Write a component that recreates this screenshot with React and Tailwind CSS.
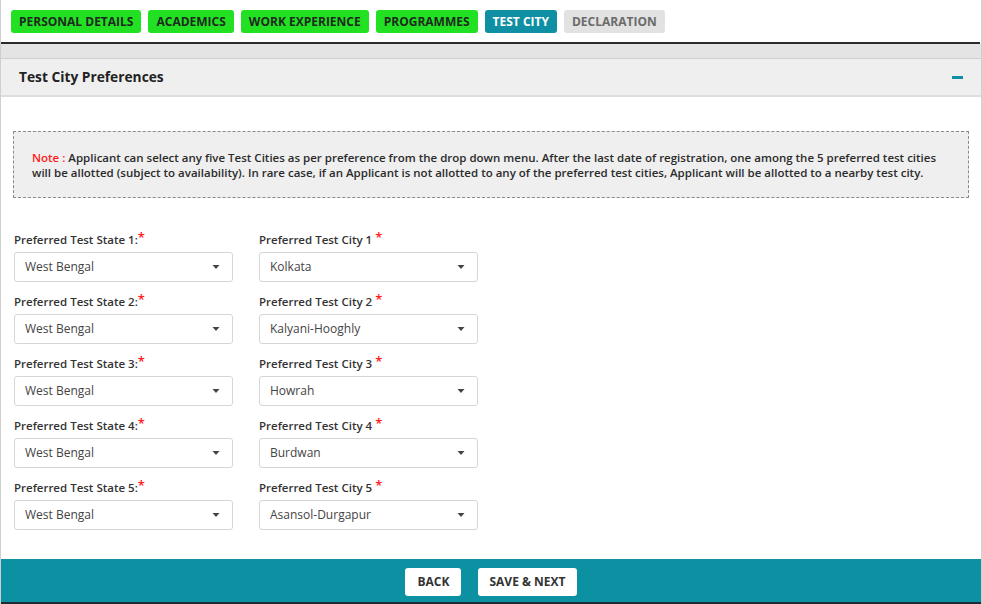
import React from "react";

const tabs = [
  { name: "PERSONAL DETAILS", state: "done" },
  { name: "ACADEMICS", state: "done" },
  { name: "WORK EXPERIENCE", state: "done" },
  { name: "PROGRAMMES", state: "done" },
  { name: "TEST CITY", state: "active" },
  { name: "DECLARATION", state: "todo" },
];

const prefs = [
  { state: "West Bengal", city: "Kolkata" },
  { state: "West Bengal", city: "Kalyani-Hooghly" },
  { state: "West Bengal", city: "Howrah" },
  { state: "West Bengal", city: "Burdwan" },
  { state: "West Bengal", city: "Asansol-Durgapur" },
];

const tabClass = {
  done: "bg-[#22e123] text-[#1f2a1f]",
  active: "bg-[#0e8fa3] text-white",
  todo: "bg-[#e2e2e2] text-[#6b6b6b]",
};

const Select = ({ value }) => (
  <div className="flex items-center justify-between w-[219px] h-[30px] border border-[#d6d6d6] rounded-[3px] bg-white pl-[10px] pr-[12px] text-[12px] text-[#444]">
    <span>{value}</span>
    <svg width="8" height="5" viewBox="0 0 8 5">
      <path d="M0.5 0h7L4 4z" fill="#444" />
    </svg>
  </div>
);

const Label = ({ children }) => (
  <div className="text-[11.5px] font-semibold text-[#333] mb-[3px] leading-[18px]">
    {children}
  </div>
);

const Star = () => (
  <span className="text-[#ff1a1a] align-top text-[13px] leading-none">*</span>
);

const App = () => {
  return (
    <div
      className="w-[982px] h-[604px] bg-white flex flex-col border-x border-[#cfcfcf] overflow-hidden"
      style={{ fontFamily: "'Open Sans', 'Noto Sans', sans-serif" }}
    >
      <div className="flex gap-[7px] px-[10px] pt-[10px] h-[42px]">
        {tabs.map((t) => (
          <div
            key={t.name}
            className={`h-[23px] px-[8px] flex items-center rounded-[3px] text-[12px] font-bold ${tabClass[t.state]}`}
          >
            {t.name}
          </div>
        ))}
      </div>
      <div className="h-[2px] bg-[#2b2b2b] mr-[1px]" />
      <div className="h-[15px] bg-[#e4e4e4] border-b border-[#d0d0d0]" />
      <div className="h-[38px] bg-[#efefef] border-b-2 border-[#dedede] flex items-center justify-between pl-[18px] pr-[18px]">
        <span className="text-[13.75px] font-bold text-[#222] pt-[1px]">Test City Preferences</span>
        <span className="w-[11px] h-[3px] bg-[#0e8fa3]" />
      </div>
      <div className="flex-1 px-[12px] pt-[34px]">
        <div className="w-[956px] h-[67px] border border-dashed border-[#8a8a8a] bg-[#efefef] px-[18px] flex items-center">
          <p className="text-[11.5px] font-semibold text-[#2b2b2b] leading-[15px]">
            <span className="text-[#ff1a1a]">Note : </span>
            Applicant can select any five Test Cities as per preference from the drop down menu. After the last date of registration, one among the 5 preferred test cities will be allotted (subject to availability). In rare case, if an Applicant is not allotted to any of the preferred test cities, Applicant will be allotted to a nearby test city.
          </p>
        </div>
        <div className="pt-[33px] pl-[1px] flex flex-col gap-[11px]">
          {prefs.map((p, i) => (
            <div key={i} className="flex gap-[26px]">
              <div>
                <Label>
                  Preferred Test State {i + 1}:<Star />
                </Label>
                <Select value={p.state} />
              </div>
              <div>
                <Label>
                  Preferred Test City {i + 1} <Star />
                </Label>
                <Select value={p.city} />
              </div>
            </div>
          ))}
        </div>
      </div>
      <div className="h-[45px] bg-[#0c91a3] border-b-2 border-[#1f2a33] flex items-center justify-center gap-[17px] pt-[2px]">
        <button className="h-[28px] px-[12px] bg-white rounded-[3px] text-[12px] font-bold text-[#333]">
          BACK
        </button>
        <button className="h-[28px] px-[11px] bg-white rounded-[3px] text-[12px] font-bold text-[#333]">
          SAVE &amp; NEXT
        </button>
      </div>
    </div>
  );
};

export default App;
